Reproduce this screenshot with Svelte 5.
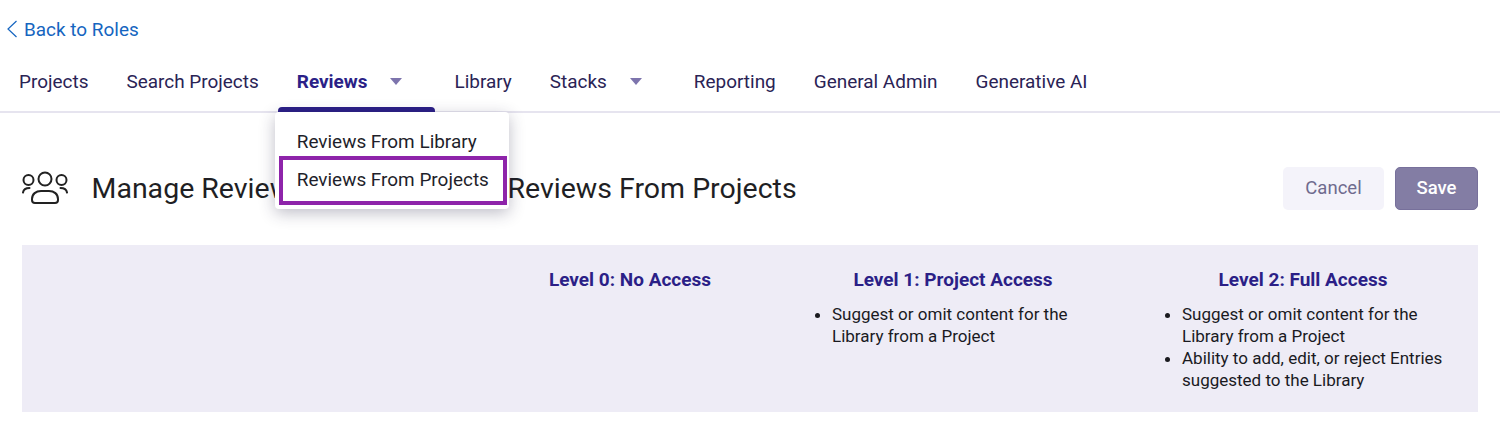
<script>
  const tabs = [
    { label: "Projects" },
    { label: "Search Projects" },
    { label: "Reviews", caret: true, active: true },
    { label: "Library" },
    { label: "Stacks", caret: true },
    { label: "Reporting" },
    { label: "General Admin" },
    { label: "Generative AI" }
  ];

  const levels = [
    { title: "Level 0: No Access", items: [] },
    {
      title: "Level 1: Project Access",
      items: ["Suggest or omit content for the Library from a Project"]
    },
    {
      title: "Level 2: Full Access",
      items: [
        "Suggest or omit content for the Library from a Project",
        "Ability to add, edit, or reject Entries suggested to the Library"
      ]
    }
  ];
</script>

<div class="page">
  <a class="back" href="#roles">
    <svg width="12" height="18" viewBox="0 0 12 18" fill="none" stroke="#1565c0" stroke-width="1.2">
      <path d="M10.5 1 L2 9 L10.5 17" />
    </svg>
    Back to Roles
  </a>

  <nav class="tabs">
    {#each tabs as tab}
      <div class="tab" class:active={tab.active} class:has-caret={tab.caret}>
        <span>{tab.label}</span>
        {#if tab.caret}<i class="caret"></i>{/if}
        {#if tab.active}
          <div class="menu">
            <div class="menu-item">Reviews From Library</div>
            <div class="menu-item selected">Reviews From Projects</div>
          </div>
        {/if}
      </div>
    {/each}
  </nav>

  <header class="head">
    <div class="title">
      <svg width="46" height="36" viewBox="0 0 46 36" fill="none" stroke="#222" stroke-width="2" stroke-linecap="round">
        <circle cx="23" cy="9" r="6.5" />
        <circle cx="6.5" cy="10" r="5" />
        <circle cx="39.5" cy="10" r="5" />
        <path d="M1 22.5 C1.5 19.5 4 18 7.5 18" />
        <path d="M45 22.5 C44.5 19.5 42 18 38.5 18" />
        <path d="M13 33 H33 a3 3 0 0 0 3 -3 v-1 c0 -5 -4 -8 -9 -8 h-8 c-5 0 -9 3 -9 8 v1 a3 3 0 0 0 3 3 z" />
      </svg>
      <h1>Manage Reviews Access Levels: Reviews From Projects</h1>
    </div>
    <div class="actions">
      <button class="cancel">Cancel</button>
      <button class="save">Save</button>
    </div>
  </header>

  <section class="levels">
    <div></div>
    {#each levels as level}
      <div class="level">
        <h2>{level.title}</h2>
        {#if level.items.length}
          <ul>
            {#each level.items as item}
              <li>{item}</li>
            {/each}
          </ul>
        {/if}
      </div>
    {/each}
  </section>
</div>

<style>
  :global(body) {
    margin: 0;
    background: #fff;
    font-family: Roboto, "Liberation Sans", sans-serif;
  }

  .page {
    width: 1500px;
    height: 430px;
    overflow: hidden;
  }

  .back {
    display: flex;
    align-items: center;
    gap: 6px;
    height: 20px;
    padding: 19px 0 0 6px;
    color: #1565c0;
    font-size: 18.95px;
    text-decoration: none;
  }

  .tabs {
    display: flex;
    height: 74px;
    border-bottom: 2px solid #e6e4ef;
    box-sizing: border-box;
  }

  .tab {
    position: relative;
    display: flex;
    align-items: center;
    height: 73px;
    padding: 11px 19px 0;
    box-sizing: border-box;
    color: #2a2355;
    font-size: 18.95px;
  }

  .tab.has-caret {
    padding-right: 33px;
  }

  .tab.active {
    font-weight: 700;
    color: #2b1f87;
  }

  .tab.active::after {
    content: "";
    position: absolute;
    left: 0;
    right: 0;
    bottom: 0;
    height: 5px;
    background: #2b1f87;
    border-radius: 4px 4px 0 0;
  }

  .caret {
    width: 0;
    height: 0;
    margin-left: 23px;
    border-left: 6.5px solid transparent;
    border-right: 6.5px solid transparent;
    border-top: 7px solid #7d74ad;
  }

  .menu {
    position: absolute;
    z-index: 2;
    top: 73px;
    left: -3px;
    width: 234px;
    height: 97px;
    padding: 11px 2px 4px 4px;
    box-sizing: border-box;
    background: #fff;
    border-radius: 4px;
    box-shadow: 0 4px 16px rgba(40, 36, 70, 0.3);
    font-weight: 400;
    color: #1f1f2b;
  }

  .menu-item {
    height: 33px;
    padding-left: 18px;
    line-height: 37px;
    white-space: nowrap;
  }

  .menu-item.selected {
    height: 49px;
    padding-left: 14px;
    line-height: 40px;
    box-sizing: border-box;
    border: 4px solid #8e24aa;
  }

  .head {
    display: flex;
    justify-content: space-between;
    align-items: center;
    height: 132px;
    padding: 18px 22px 0;
    box-sizing: border-box;
  }

  .title {
    display: flex;
    align-items: center;
    gap: 23.5px;
  }

  h1 {
    margin: 0;
    font-size: 28.5px;
    font-weight: 400;
    color: #1f1f24;
  }

  .actions {
    display: flex;
    gap: 11px;
  }

  button {
    height: 43px;
    border: none;
    border-radius: 5px;
    font: inherit;
    font-size: 18.5px;
  }

  .cancel {
    width: 101px;
    background: #f4f3fa;
    color: #6f6b8e;
  }

  .save {
    width: 83px;
    background: #837da4;
    border: 1px solid #77709b;
    color: #fff;
    font-weight: 500;
  }

  .levels {
    display: grid;
    grid-template-columns: 460px 296px 350px 350px;
    height: 167px;
    margin: 0 22px;
    background: #eeecf6;
  }

  h2 {
    margin: 24px 0 0;
    font-size: 19px;
    line-height: 22px;
    font-weight: 700;
    text-align: center;
    color: #2b1f87;
  }

  ul {
    margin: 12px 0 0;
    padding: 0 20px 0 54px;
    font-size: 17px;
    line-height: 22px;
    color: #1a1a1f;
  }
</style>
